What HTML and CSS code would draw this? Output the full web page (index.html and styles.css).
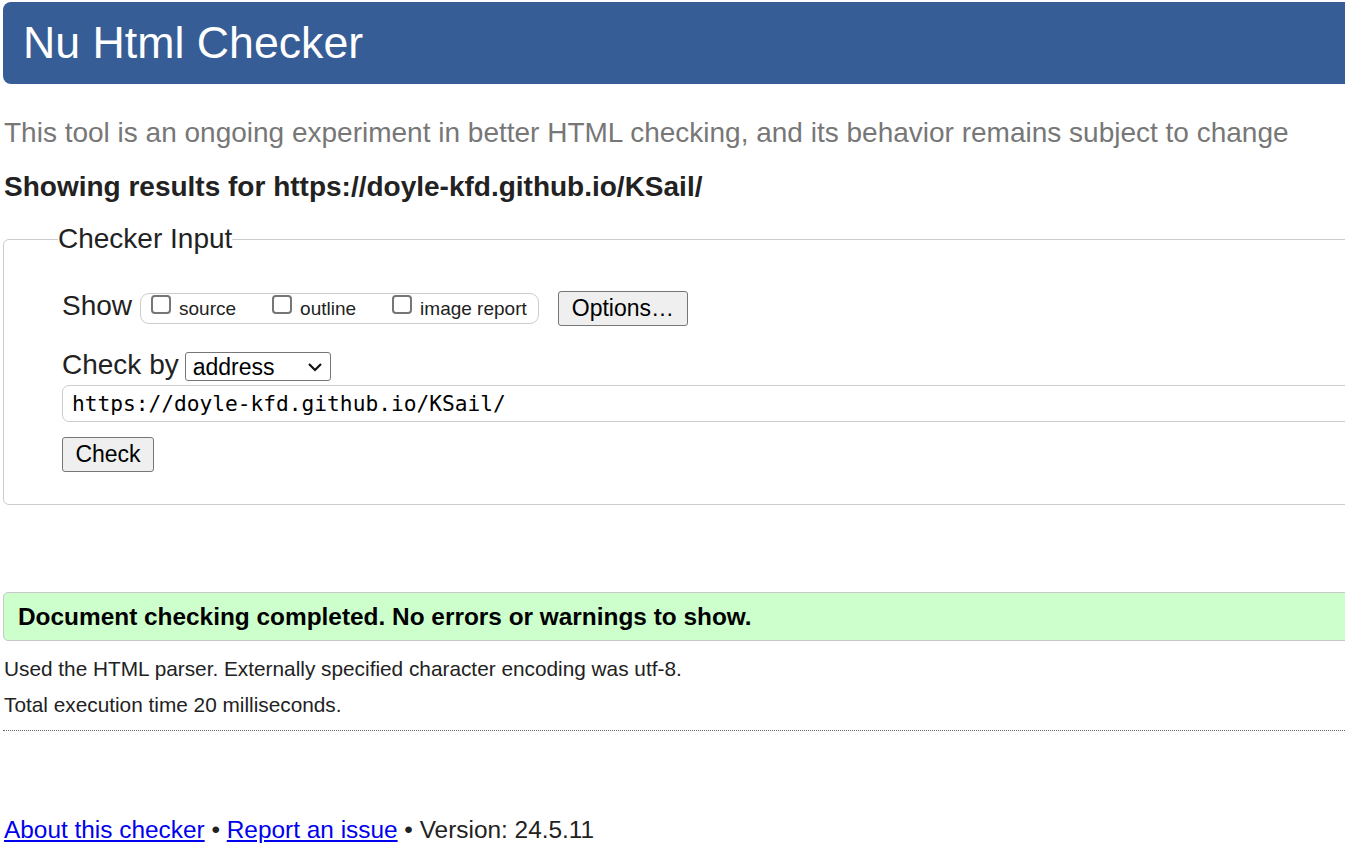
FILE: index.html
```html
<!DOCTYPE html>
<html lang="en">
<head>
<meta charset="utf-8">
<title>Nu Html Checker</title>
<link rel="stylesheet" href="styles.css">
</head>
<body>
<div class="page">
  <header class="banner"><h1 class="banner-title">Nu Html Checker</h1></header>
  <p class="tagline">This tool is an ongoing experiment in better HTML checking, and its behavior remains subject to change</p>
  <p class="results-for">Showing results for https://doyle-kfd.github.io/KSail/</p>
  <form class="checker">
    <fieldset class="checker-set">
      <legend class="checker-legend">Checker Input</legend>
      <div class="show-row">
        <span class="row-label">Show</span>
        <div class="pill">
          <label class="opt"><input type="checkbox" class="cb"><span class="opt-text">source</span></label>
          <label class="opt"><input type="checkbox" class="cb"><span class="opt-text">outline</span></label>
          <label class="opt"><input type="checkbox" class="cb"><span class="opt-text">image report</span></label>
        </div>
        <button type="button" class="btn btn-options">Options…</button>
      </div>
      <div class="by-row">
        <span class="row-label">Check by</span>
        <div class="select-wrap">
          <select class="select"><option>address</option></select>
          <svg class="chev" width="16" height="10" viewBox="0 0 16 10"><path d="M2 2 L8 8 L14 2" fill="none" stroke="#111" stroke-width="2.2"/></svg>
        </div>
      </div>
      <input class="url" type="text" value="https://doyle-kfd.github.io/KSail/">
      <div class="submit-row"><button type="button" class="btn btn-check">Check</button></div>
    </fieldset>
  </form>
  <div class="success"><p class="success-text">Document checking completed. No errors or warnings to show.</p></div>
  <p class="details">Used the HTML parser. Externally specified character encoding was utf-8.</p>
  <p class="details details-time">Total execution time 20 milliseconds.</p>
  <hr class="rule">
  <p class="footer"><a href="#">About this checker</a> • <a href="#">Report an issue</a> • Version: 24.5.11</p>
</div>
</body>
</html>
```
FILE: styles.css
```css
html { overflow: hidden; }
body {
  margin: 0;
  padding: 2px 0 0 3px;
  font-family: "Liberation Sans", Arial, sans-serif;
  color: #222;
  background: #fff;
}
.page { width: 1440px; }

.banner {
  height: 82px;
  background: #365d95;
  border-radius: 8px;
  display: flex;
  align-items: center;
  padding-left: 20px;
}
.banner-title {
  margin: 0;
  font-weight: normal;
  font-size: 44.7px;
  line-height: 50px;
  color: #fff;
}

.tagline {
  margin: 32.5px 0 0 1px;
  font-size: 28px;
  line-height: 32px;
  color: #777;
}
.results-for {
  margin: 22px 0 0 1px;
  font-size: 28px;
  line-height: 32px;
  font-weight: bold;
}

.checker { margin: 20.5px 0 0; }
.checker-set {
  margin: 0;
  border: 1px solid #ccc;
  border-radius: 6px;
  padding: 36px 0 32px 58px;
}
.checker-legend {
  padding: 0;
  margin-left: -4px;
  font-size: 28px;
  line-height: 32px;
}

.show-row {
  display: flex;
  align-items: center;
  height: 35px;
}
.row-label {
  font-size: 28px;
  line-height: 32px;
}
.show-row .row-label { margin-bottom: 5px; margin-right: 8px; }

.pill {
  display: flex;
  align-items: flex-start;
  box-sizing: border-box;
  height: 31px;
  border: 1px solid #ccc;
  border-radius: 9px;
  padding: 1px 11px 0 10px;
  gap: 36px;
}
.opt {
  display: flex;
  align-items: flex-start;
}
.cb {
  appearance: none;
  -webkit-appearance: none;
  margin: 0;
  width: 20px;
  height: 19px;
  box-sizing: border-box;
  border: 2px solid #767676;
  border-radius: 4px;
  background: #fff;
}
.opt-text {
  margin: 3.5px 0 0 8px;
  font-size: 19px;
  line-height: 20px;
}

.btn {
  font-family: "Liberation Sans", Arial, sans-serif;
  font-size: 23px;
  color: #000;
  background: #efefef;
  border: 1px solid #767676;
  border-radius: 3px;
  height: 35px;
  padding: 0 13px;
}
.btn-options { margin-left: 19px; width: 130px; }
.btn-check { width: 92px; padding: 0; }

.by-row {
  display: flex;
  align-items: center;
  margin-top: 26px;
  height: 29px;
}
.by-row .row-label { margin-right: 6px; margin-bottom: 3px; }
.select-wrap { position: relative; }
.select {
  appearance: none;
  -webkit-appearance: none;
  display: block;
  width: 146px;
  height: 29px;
  box-sizing: border-box;
  border: 1px solid #767676;
  border-radius: 3px;
  background: #fff;
  padding: 0 0 0 7px;
  font-family: "Liberation Sans", Arial, sans-serif;
  font-size: 23px;
  color: #000;
}
.chev {
  position: absolute;
  right: 8px;
  top: 10px;
  pointer-events: none;
}

.url {
  display: block;
  box-sizing: border-box;
  width: 1370px;
  height: 37px;
  margin-top: 4px;
  border: 1px solid #ccc;
  border-radius: 7px;
  padding: 0 0 0 9px;
  font-family: "DejaVu Sans Mono", monospace;
  font-size: 21.2px;
  color: #000;
}
.submit-row { margin-top: 15px; display: flex; }

.success {
  margin-top: 87px;
  box-sizing: border-box;
  height: 49px;
  background: #ccffcc;
  border: 1px solid #c8c8c8;
  border-radius: 5px;
  display: flex;
  align-items: center;
  padding-left: 14px;
}
.success-text {
  margin: 0;
  font-size: 24.4px;
  line-height: 30px;
  font-weight: bold;
  color: #000;
}

.details {
  margin: 15.5px 0 0 1px;
  font-size: 20.8px;
  line-height: 24px;
}
.details-time { margin-top: 12.5px; }

.rule {
  margin: 13px 0 0;
  border: 0;
  border-top: 1px dotted #666;
  height: 0;
  width: 1342px;
}

.footer {
  margin: 85px 0 0 1px;
  font-size: 24.4px;
  line-height: 28px;
}
.footer a { color: #0000ee; text-decoration: underline; }
```
